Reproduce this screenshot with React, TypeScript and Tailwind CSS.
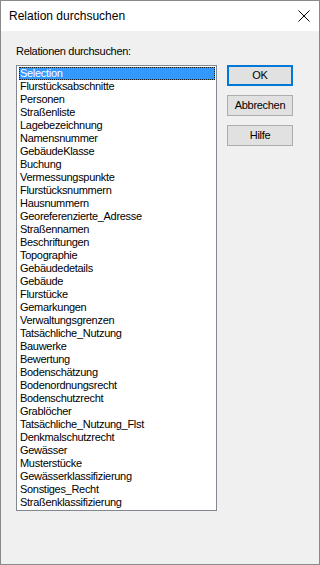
import React, { FC } from 'react'

const items: string[] = [
  'Selection',
  'Flurstücksabschnitte',
  'Personen',
  'Straßenliste',
  'Lagebezeichnung',
  'Namensnummer',
  'GebäudeKlasse',
  'Buchung',
  'Vermessungspunkte',
  'Flurstücksnummern',
  'Hausnummern',
  'Georeferenzierte_Adresse',
  'Straßennamen',
  'Beschriftungen',
  'Topographie',
  'Gebäudedetails',
  'Gebäude',
  'Flurstücke',
  'Gemarkungen',
  'Verwaltungsgrenzen',
  'Tatsächliche_Nutzung',
  'Bauwerke',
  'Bewertung',
  'Bodenschätzung',
  'Bodenordnungsrecht',
  'Bodenschutzrecht',
  'Grablöcher',
  'Tatsächliche_Nutzung_Flst',
  'Denkmalschutzrecht',
  'Gewässer',
  'Musterstücke',
  'Gewässerklassifizierung',
  'Sonstiges_Recht',
  'Straßenklassifizierung',
]

const sysFont = { fontFamily: '"Liberation Sans", Arial, sans-serif' }

interface ButtonProps {
  label: string,
  primary?: boolean,
}

const DlgButton: FC<ButtonProps> = ({ label, primary = false }) => {
  return (
    <button
      className={`w-[66px] h-[21px] bg-[#e1e1e1] text-[11px] tracking-[-0.3px] text-black flex items-center justify-center
        ${primary ? 'border-2 border-[#0078d7]' : 'border border-[#adadad]'}`}
    >
      {label}
    </button>
  )
}

const App: FC = () => {
  return (
    <div style={sysFont} className="w-[320px] h-[565px] border border-[#8a8a8a] flex flex-col bg-[#f0f0f0] overflow-hidden">
      {/* title bar */}
      <div className="h-[30px] bg-white flex items-center justify-between pl-[8px] pr-[9px] shrink-0">
        <span className="text-[12px] text-black">Relation durchsuchen</span>
        <svg width="12" height="12" viewBox="0 0 12 12">
          <path d="M0.5 0.5 L11.5 11.5 M11.5 0.5 L0.5 11.5" stroke="#000" strokeWidth="1" fill="none" />
        </svg>
      </div>

      {/* body */}
      <div className="flex-1 pl-[15px] pt-[14px]">
        <div className="text-[11px] leading-[13px] tracking-[-0.3px] text-black">Relationen durchsuchen:</div>
        <div className="flex mt-[7px]">
          <div className="w-[201px] h-[446px] border border-[#828790] bg-white pt-[1px] pl-[2px] pr-[1px]">
            {
              items.map((item, i) => {
                return (
                  <div
                    key={item}
                    className={`h-[13px] text-[11px] leading-[13px] tracking-[-0.3px] pl-[1px] whitespace-nowrap
                    ${i === 0 ? 'bg-[#3399ff] text-white outline-1 outline-dotted outline-offset-[-1px] outline-[#1a1a1a]' : 'text-black'}`}
                  >
                    {item}
                  </div>
                )
              })
            }
          </div>
          <div className="ml-[10px] flex flex-col gap-[9px]">
            <DlgButton label="OK" primary />
            <DlgButton label="Abbrechen" />
            <DlgButton label="Hilfe" />
          </div>
        </div>
      </div>
    </div>
  )
}

export default App
